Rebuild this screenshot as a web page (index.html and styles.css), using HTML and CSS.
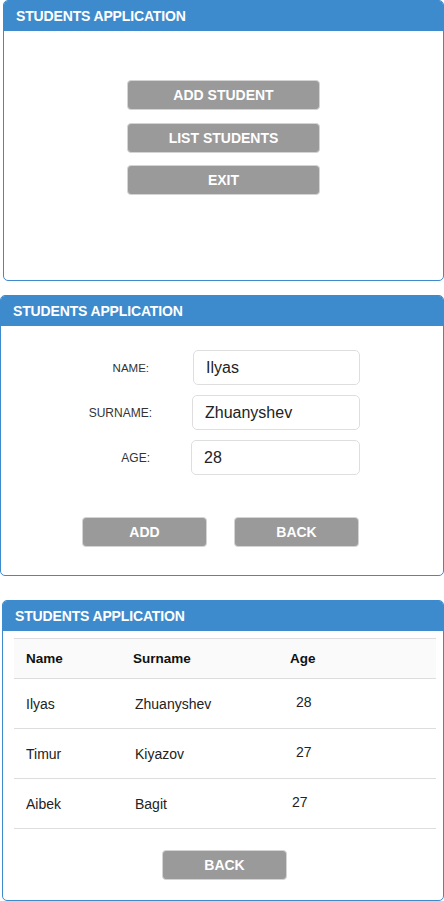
FILE: index.html
```html
<!DOCTYPE html>
<html>
<head>
<meta charset="utf-8">
<link rel="stylesheet" href="styles.css">
</head>
<body>
<div class="page">
  <section class="panel panel-menu">
    <div class="panel-head">STUDENTS APPLICATION</div>
    <div class="menu-body">
      <button class="btn btn-wide">ADD STUDENT</button>
      <button class="btn btn-wide">LIST STUDENTS</button>
      <button class="btn btn-wide">EXIT</button>
    </div>
  </section>

  <section class="panel panel-form">
    <div class="panel-head">STUDENTS APPLICATION</div>
    <div class="form-body">
      <div class="form-grid">
        <label class="lbl lbl-name">NAME:</label>
        <div class="field field-name">Ilyas</div>
        <label class="lbl lbl-surname">SURNAME:</label>
        <div class="field field-surname">Zhuanyshev</div>
        <label class="lbl lbl-age">AGE:</label>
        <div class="field field-age">28</div>
      </div>
      <div class="form-actions">
        <button class="btn btn-mid">ADD</button>
        <button class="btn btn-mid">BACK</button>
      </div>
    </div>
  </section>

  <section class="panel panel-list">
    <div class="panel-head">STUDENTS APPLICATION</div>
    <div class="list-body">
      <table class="students">
        <thead>
          <tr><th class="c1">Name</th><th class="c2">Surname</th><th class="c3">Age</th><th class="c4"></th></tr>
        </thead>
        <tbody>
          <tr><td class="c1">Ilyas</td><td class="c2">Zhuanyshev</td><td class="c3 age-a">28</td><td class="c4"></td></tr>
          <tr><td class="c1">Timur</td><td class="c2">Kiyazov</td><td class="c3 age-a">27</td><td class="c4"></td></tr>
          <tr><td class="c1">Aibek</td><td class="c2">Bagit</td><td class="c3 age-b">27</td><td class="c4"></td></tr>
        </tbody>
      </table>
      <div class="list-actions">
        <button class="btn btn-mid">BACK</button>
      </div>
    </div>
  </section>
</div>
</body>
</html>
```
FILE: styles.css
```css
* { box-sizing: border-box; }
html, body { margin: 0; padding: 0; background: #fff; }
body { font-family: "Liberation Sans", Arial, sans-serif; color: #222; }

.page { display: flex; flex-direction: column; width: 444px; }

.panel {
  border: 1px solid #3d8bcd;
  border-radius: 5px;
  overflow: hidden;
  background: #fff;
}
.panel-head {
  height: 30px;
  background: #3d8bcd;
  color: #fff;
  font-weight: bold;
  font-size: 14px;
  letter-spacing: -0.15px;
  line-height: 31px;
  padding-left: 12px;
}

.btn {
  display: block;
  height: 30px;
  border: 1px solid #d4d4d4;
  border-radius: 4px;
  background: #9a9a9a;
  color: #fff;
  font-family: "Liberation Sans", Arial, sans-serif;
  font-weight: bold;
  font-size: 14px;
  padding: 0;
  line-height: 29px;
}
.btn-wide { width: 193px; }
.btn-mid { width: 125px; }

/* panel 1 */
.panel-menu { margin-left: 3px; width: 441px; height: 281px; }
.menu-body {
  display: flex;
  flex-direction: column;
  align-items: center;
  gap: 12.5px;
  padding-top: 49px;
}

/* panel 2 */
.panel-form { margin-top: 14px; width: 444px; height: 281px; }
.form-body { padding-top: 24px; }
.form-grid {
  display: grid;
  grid-template-columns: 150px 167px;
  column-gap: 42px;
  row-gap: 10px;
  align-items: center;
}
.lbl {
  text-align: right;
  font-size: 12px;
  color: #333;
}
.lbl-name { margin-right: 2px; font-size: 11.5px; }
.lbl-surname { margin-right: -1px; }
.lbl-age { margin-right: 1px; }
.field {
  height: 35px;
  border: 1px solid #dedede;
  border-radius: 5px;
  font-size: 16px;
  line-height: 33px;
  padding-left: 12px;
  color: #222;
}
.field-surname { margin-left: -1px; }
.field-age { margin-left: -2px; }
.form-actions {
  display: flex;
  justify-content: center;
  gap: 27px;
  margin-top: 42px;
  padding-right: 3px;
}

/* panel 3 */
.panel-list { margin-top: 24px; margin-left: 2px; width: 442px; height: 301px; }
.list-body { padding-top: 7px; }
.students {
  margin-left: 11px;
  width: 422px;
  border-collapse: collapse;
}
.students th, .students td {
  border-top: 1px solid #ddd;
  border-bottom: 1px solid #ddd;
  text-align: left;
  padding: 0 0 0 12px;
}
.students th {
  height: 40px;
  background: #fafafa;
  font-weight: bold;
  font-size: 13.5px;
  color: #111;
}
.students td {
  height: 50px;
  font-size: 14px;
  color: #222;
}
.c1 { width: 107px; }
.c2 { width: 157px; }
.c3 { width: 70px; }
.students td.c2 { padding-left: 14px; }
.students td.age-a { padding-left: 18px; padding-bottom: 4px; }
.students td.age-b { padding-left: 14px; padding-bottom: 4px; }
.list-actions {
  display: flex;
  justify-content: center;
  margin-top: 21px;
  padding-left: 3px;
}
```
